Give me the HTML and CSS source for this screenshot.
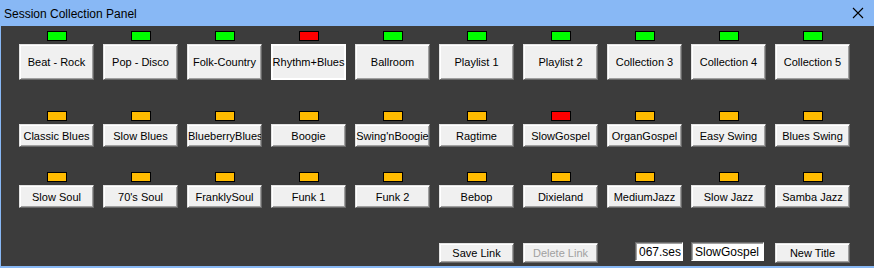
FILE: index.html
```html
<!DOCTYPE html>
<html>
<head>
<meta charset="utf-8">
<link rel="stylesheet" href="styles.css">
</head>
<body>
<div class="window">
  <div class="titlebar">
    <span class="title">Session Collection Panel</span>
    <svg class="close" width="12" height="12" viewBox="0 0 12 12"><path d="M1 1 L11 11 M11 1 L1 11" stroke="#000" stroke-width="1.1" fill="none"/></svg>
  </div>
  <div class="panel">
    <div class="grid row1">
      <div class="cell"><span class="led green"></span><button class="btn big">Beat - Rock</button></div>
      <div class="cell"><span class="led green"></span><button class="btn big">Pop - Disco</button></div>
      <div class="cell"><span class="led green"></span><button class="btn big">Folk-Country</button></div>
      <div class="cell"><span class="led red"></span><button class="btn big sel">Rhythm+Blues</button></div>
      <div class="cell"><span class="led green"></span><button class="btn big">Ballroom</button></div>
      <div class="cell"><span class="led green"></span><button class="btn big">Playlist 1</button></div>
      <div class="cell"><span class="led green"></span><button class="btn big">Playlist 2</button></div>
      <div class="cell"><span class="led green"></span><button class="btn big">Collection 3</button></div>
      <div class="cell"><span class="led green"></span><button class="btn big">Collection 4</button></div>
      <div class="cell"><span class="led green"></span><button class="btn big">Collection 5</button></div>
    </div>
    <div class="grid row2">
      <div class="cell"><span class="led orange"></span><button class="btn">Classic Blues</button></div>
      <div class="cell"><span class="led orange"></span><button class="btn">Slow Blues</button></div>
      <div class="cell"><span class="led orange"></span><button class="btn">BlueberryBlues</button></div>
      <div class="cell"><span class="led orange"></span><button class="btn">Boogie</button></div>
      <div class="cell"><span class="led orange"></span><button class="btn">Swing'nBoogie</button></div>
      <div class="cell"><span class="led orange"></span><button class="btn">Ragtime</button></div>
      <div class="cell"><span class="led red"></span><button class="btn">SlowGospel</button></div>
      <div class="cell"><span class="led orange"></span><button class="btn">OrganGospel</button></div>
      <div class="cell"><span class="led orange"></span><button class="btn">Easy Swing</button></div>
      <div class="cell"><span class="led orange"></span><button class="btn">Blues Swing</button></div>
    </div>
    <div class="grid row3">
      <div class="cell"><span class="led orange"></span><button class="btn">Slow Soul</button></div>
      <div class="cell"><span class="led orange"></span><button class="btn">70's Soul</button></div>
      <div class="cell"><span class="led orange"></span><button class="btn">FranklySoul</button></div>
      <div class="cell"><span class="led orange"></span><button class="btn">Funk 1</button></div>
      <div class="cell"><span class="led orange"></span><button class="btn">Funk 2</button></div>
      <div class="cell"><span class="led orange"></span><button class="btn">Bebop</button></div>
      <div class="cell"><span class="led orange"></span><button class="btn">Dixieland</button></div>
      <div class="cell"><span class="led orange"></span><button class="btn">MediumJazz</button></div>
      <div class="cell"><span class="led orange"></span><button class="btn">Slow Jazz</button></div>
      <div class="cell"><span class="led orange"></span><button class="btn">Samba Jazz</button></div>
    </div>
    <div class="grid footer">
      <button class="btn small col6">Save Link</button>
      <button class="btn small disabled col7">Delete Link</button>
      <div class="field file col8"><span>067.ses</span></div>
      <div class="field name col9"><span>SlowGospel</span></div>
      <button class="btn small col10">New Title</button>
    </div>
  </div>
</div>
</body>
</html>
```

FILE: styles.css
```css
* { box-sizing: border-box; }
html, body { margin: 0; padding: 0; background: #3c3c3c; }
.window {
  width: 874px;
  height: 268px;
  display: flex;
  flex-direction: column;
  font-family: "Liberation Sans", Arial, sans-serif;
}
.titlebar {
  height: 26px;
  background: #88b8f5;
  display: flex;
  align-items: center;
  justify-content: space-between;
  padding: 0 8px 0 4px;
}
.title {
  font-size: 12px;
  color: #000;
  padding-top: 1px;
}
.close { display: block; margin-right: 2px; }
.panel {
  flex: 1;
  background: #3c3c3c;
  border-left: 1px solid #88b8f5;
  border-bottom: 2px solid #88b8f5;
  padding-left: 18px;
}
.grid {
  display: grid;
  grid-template-columns: repeat(10, 75px);
  column-gap: 9px;
}
.row1 { margin-top: 5px; }
.row2 { margin-top: 31px; }
.row3 { margin-top: 25px; }
.footer { margin-top: 35px; align-items: start; }
.cell {
  display: flex;
  flex-direction: column;
  align-items: center;
}
.led {
  display: block;
  width: 20px;
  height: 10px;
  border: 1px solid #000;
  margin-bottom: 3px;
}
.green { background: #00ff00; }
.red { background: #ff0000; }
.orange { background: #ffbb00; }
.btn {
  width: 75px;
  height: 23px;
  margin: 0;
  padding: 0;
  background: #f0f0f0;
  border: 1px solid;
  border-color: #e3e3e3 #696969 #696969 #e3e3e3;
  box-shadow: inset 1px 1px #ffffff, inset -1px -1px #a0a0a0;
  font-family: "Liberation Sans", Arial, sans-serif;
  font-size: 11px;
  color: #000;
  white-space: nowrap;
  overflow: hidden;
  text-align: center;
}
.btn.big { height: 36px; }
.btn.small { height: 20px; }
.btn.sel {
  border-color: #ffffff;
  box-shadow: inset 1px 1px #ffffff, inset -1px -1px #ffffff;
}
.btn.disabled { color: #a0a0a0; }
.col6 { grid-column: 6; }
.col7 { grid-column: 7; }
.col8 { grid-column: 8; }
.col9 { grid-column: 9; }
.col10 { grid-column: 10; }
.field {
  height: 19px;
  margin-top: -1px;
  background: #fff;
  border: 1px solid;
  border-color: #696969 #ffffff #ffffff #696969;
  box-shadow: inset 1px 1px #a0a0a0;
  font-size: 12px;
  color: #000;
  overflow: hidden;
  white-space: nowrap;
  display: flex;
  align-items: center;
}
.field.file {
  width: 48px;
  justify-self: end;
  justify-content: flex-end;
  padding-right: 1px;
  margin-right: -1px;
}
.field.name {
  width: 73px;
  padding-left: 3px;
}
```
